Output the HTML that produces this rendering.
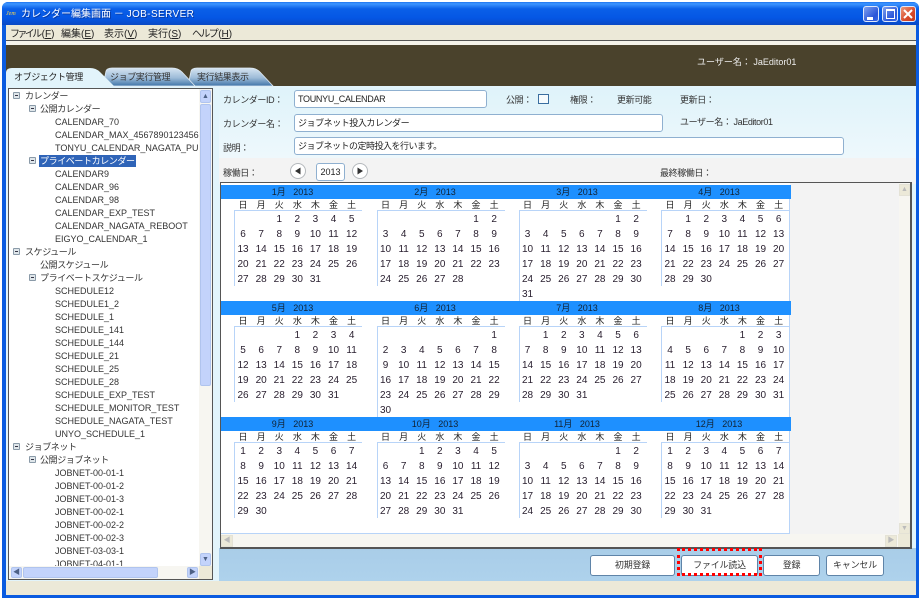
<!DOCTYPE html>
<html><head><meta charset="utf-8"><style>
html,body{margin:0;padding:0;background:#fff}
body{width:922px;height:600px;overflow:hidden;position:relative;font-family:"Liberation Sans","Noto Sans CJK JP",sans-serif;color:#333;filter:blur(.3px)}
div,span{box-sizing:border-box}
.a{position:absolute}
.t{position:absolute;white-space:nowrap;font-size:9px;line-height:13px;color:#333}
.j{letter-spacing:-.4px}
.i{position:absolute;background:#fff;border:1px solid #8fb0d0;border-radius:3px;font-size:9px;line-height:16px;padding-left:3px;color:#222;white-space:nowrap}
.b{position:absolute;top:555px;height:21px;background:#fff;border:1px solid #5f84a8;border-radius:3px;font-size:9px;line-height:19px;text-align:center;color:#333;letter-spacing:-.2px}
.x{position:absolute;width:7px;height:7px;border:1px solid #8a9aa8;background:#dfe6ea;border-radius:1px}
.x:after{content:"";position:absolute;left:1px;top:2px;width:3px;height:1px;background:#334}
.m{position:absolute;width:143px;height:116px;color:#222}
.m b{display:block;width:143px;height:14px;background:#1e90ff;font-weight:normal;font-size:9px;line-height:14px;text-align:center;color:#123;white-space:pre;padding-right:1px}
.m p{margin:0 0 0 13px;display:grid;grid-template-columns:repeat(7,18.1px);height:11px;font-size:9px;line-height:12px;text-align:center;color:#222}
.g{display:grid;grid-template-columns:repeat(7,18.1px);grid-auto-rows:15px;margin-left:13px;border-top:1px solid #b8d4f8;font-size:10px;line-height:17px;text-align:center;color:#2a2030;position:relative;width:128px}
.g:before{content:"";position:absolute;left:0;top:-1px;bottom:0;width:1px;background:#b8d4f8}
.wb{position:absolute;top:6px;width:16px;height:16px;border:1px solid #dfe8fa;border-radius:3px;background:linear-gradient(135deg,#7fa0ee,#2a55d8 70%,#3c6ae6)}
.sb{position:absolute;background:#c3d3fb;border:1px solid #b0c4ee;border-radius:2px;color:#4d6185;text-align:center;font-size:7px;line-height:10px}
.mn{position:absolute;top:28px;white-space:nowrap;font-size:10px;line-height:13px;color:#222}
</style></head><body>

<!-- window frame -->
<div class="a" style="left:2px;top:2px;width:917px;height:596px;border-radius:6px 6px 0 0;background:#0a5be0"></div>
<div class="a" style="left:2px;top:2px;width:917px;height:23px;border-radius:6px 6px 0 0;background:linear-gradient(#1e74f0 0,#3d95ff 8%,#0a5fe8 30%,#0556e4 70%,#0a49c4 100%)"></div>
<div class="a" style="left:6px;top:25px;width:910px;height:570px;background:#ece9d8"></div>

<!-- title bar -->
<span class="t" style="left:6px;top:8px;font:italic 6px/12px 'Liberation Serif',serif;color:#ffd84a">Jem</span>
<span class="t" style="left:21px;top:7px;font-size:10px;line-height:15px;color:#fff;text-shadow:1px 1px 0 #0a3aa0">カレンダー編集画面 － <span style="letter-spacing:.4px">JOB-SERVER</span></span>
<div class="wb" style="left:863px"><div class="a" style="left:3px;top:10px;width:6px;height:3px;background:#fff"></div></div>
<div class="wb" style="left:882px"><div class="a" style="left:3px;top:2px;width:9px;height:10px;border:1px solid #fff;border-top-width:2px"></div></div>
<div class="wb" style="left:900px;background:linear-gradient(135deg,#ec9a7c,#d8492a 60%,#c43a1c)"><svg class="a" style="left:2px;top:2px" width="10" height="10"><path d="M1 1L9 9M9 1L1 9" stroke="#fff" stroke-width="2"/></svg></div>

<!-- menu -->
<span class="mn" style="left:10px"><span style="letter-spacing:-2.6px">ファイル</span><span style="margin-left:2px">(<u>F</u>)</span></span>
<span class="mn" style="left:61px">編集(<u>E</u>)</span>
<span class="mn" style="left:104px">表示(<u>V</u>)</span>
<span class="mn" style="left:148px">実行(<u>S</u>)</span>
<span class="mn" style="left:192px"><span style="letter-spacing:-1.6px">ヘルプ</span><span style="margin-left:1px">(<u>H</u>)</span></span>
<div class="a" style="left:6px;top:40px;width:910px;height:1px;background:#555"></div>
<div class="a" style="left:6px;top:41px;width:910px;height:4px;background:#f5f3ea"></div>

<!-- dark band -->
<div class="a" style="left:6px;top:45px;width:910px;height:41px;background:#4a422c"></div>
<span class="t" style="left:697px;top:56px;color:#eee">ユーザー名： JaEditor01</span>

<!-- main panels -->
<div class="a" style="left:6px;top:86px;width:910px;height:495px;background:#e2f4fb"></div>
<div class="a" style="left:219px;top:88px;width:697px;height:70px;background:linear-gradient(#dff3fa,#eef8fc)"></div>
<div class="a" style="left:219px;top:158px;width:697px;height:26px;background:#f3f3f3"></div>
<div class="a" style="left:219px;top:548px;width:697px;height:33px;background:linear-gradient(#a9cde8,#aed2ec)"></div>
<div class="a" style="left:6px;top:581px;width:910px;height:14px;background:#ece9d8"></div>

<!-- tabs -->
<svg class="a" style="left:0;top:64px" width="290" height="26">
<defs><linearGradient id="tg" x1="0" y1="0" x2="0" y2="1"><stop offset="0" stop-color="#d6e5f2"/><stop offset=".55" stop-color="#9dbbd8"/><stop offset="1" stop-color="#3f74a8"/></linearGradient></defs>
<path d="M188 22 L191 7 Q192 4 197 4 L250 4 Q256 4 260 8 L273 22Z" fill="url(#tg)" stroke="#dfeaf3" stroke-width=".8"/>
<path d="M103 22 L106 7 Q107 4 112 4 L172 4 Q178 4 182 8 L195 22Z" fill="url(#tg)" stroke="#dfeaf3" stroke-width=".8"/>
<path d="M6 24 L6 9 Q6 4 12 4 L90 4 Q96 4 100 8 L114 22 L114 24Z" fill="#e2f4fb"/>
</svg>
<span class="t j" style="left:14px;top:71px;color:#222">オブジェクト管理</span>
<span class="t j" style="left:110px;top:71px;color:#333">ジョブ実行管理</span>
<span class="t j" style="left:197px;top:71px;color:#333">実行結果表示</span>

<!-- tree panel -->
<div class="a" style="left:8px;top:88px;width:205px;height:492px;background:#fff;border:1px solid #555;overflow:hidden">
<div class="a" style="left:0;top:0;width:190px;height:478px;overflow:hidden">
<div class="x" style="left:4px;top:3px"></div><span class="t j" style="left:16px;top:1px">カレンダー</span>
<div class="x" style="left:20px;top:16px"></div><span class="t j" style="left:31px;top:14px">公開カレンダー</span>
<span class="t" style="left:46px;top:27px">CALENDAR_70</span>
<span class="t" style="left:46px;top:40px">CALENDAR_MAX_456789012345678</span>
<span class="t" style="left:46px;top:53px">TONYU_CALENDAR_NAGATA_PUBLIC</span>
<div class="x" style="left:20px;top:68px"></div><span class="t j" style="left:30px;top:66px;background:#2f64b8;color:#fff;padding:0 1px;height:12px;line-height:12px">プライベートカレンダー</span>
<span class="t" style="left:46px;top:79px">CALENDAR9</span>
<span class="t" style="left:46px;top:92px">CALENDAR_96</span>
<span class="t" style="left:46px;top:105px">CALENDAR_98</span>
<span class="t" style="left:46px;top:118px">CALENDAR_EXP_TEST</span>
<span class="t" style="left:46px;top:131px">CALENDAR_NAGATA_REBOOT</span>
<span class="t" style="left:46px;top:144px">EIGYO_CALENDAR_1</span>
<div class="x" style="left:4px;top:159px"></div><span class="t j" style="left:16px;top:157px">スケジュール</span>
<span class="t j" style="left:31px;top:170px">公開スケジュール</span>
<div class="x" style="left:20px;top:185px"></div><span class="t j" style="left:31px;top:183px">プライベートスケジュール</span>
<span class="t" style="left:46px;top:196px">SCHEDULE12</span>
<span class="t" style="left:46px;top:209px">SCHEDULE1_2</span>
<span class="t" style="left:46px;top:222px">SCHEDULE_1</span>
<span class="t" style="left:46px;top:235px">SCHEDULE_141</span>
<span class="t" style="left:46px;top:248px">SCHEDULE_144</span>
<span class="t" style="left:46px;top:261px">SCHEDULE_21</span>
<span class="t" style="left:46px;top:274px">SCHEDULE_25</span>
<span class="t" style="left:46px;top:287px">SCHEDULE_28</span>
<span class="t" style="left:46px;top:300px">SCHEDULE_EXP_TEST</span>
<span class="t" style="left:46px;top:313px">SCHEDULE_MONITOR_TEST</span>
<span class="t" style="left:46px;top:326px">SCHEDULE_NAGATA_TEST</span>
<span class="t" style="left:46px;top:339px">UNYO_SCHEDULE_1</span>
<div class="x" style="left:4px;top:354px"></div><span class="t j" style="left:16px;top:352px">ジョブネット</span>
<div class="x" style="left:20px;top:367px"></div><span class="t j" style="left:31px;top:365px">公開ジョブネット</span>
<span class="t" style="left:46px;top:378px">JOBNET-00-01-1</span>
<span class="t" style="left:46px;top:391px">JOBNET-00-01-2</span>
<span class="t" style="left:46px;top:404px">JOBNET-00-01-3</span>
<span class="t" style="left:46px;top:417px">JOBNET-00-02-1</span>
<span class="t" style="left:46px;top:430px">JOBNET-00-02-2</span>
<span class="t" style="left:46px;top:443px">JOBNET-00-02-3</span>
<span class="t" style="left:46px;top:456px">JOBNET-03-03-1</span>
<span class="t" style="left:46px;top:469px">JOBNET-04-01-1</span>
</div>
<!-- v scrollbar -->
<div class="a" style="left:190px;top:0;width:13px;height:490px;background:#f7f6f1"></div>
<div class="sb" style="left:191px;top:1px;width:11px;height:13px;line-height:12px">&#9650;</div>
<div class="sb" style="left:191px;top:15px;width:11px;height:282px"></div>
<div class="sb" style="left:191px;top:464px;width:11px;height:13px;line-height:12px">&#9660;</div>
<!-- h scrollbar -->
<div class="a" style="left:0;top:477px;width:190px;height:13px;background:#f7f6f1"></div>
<div class="sb" style="left:2px;top:478px;width:11px;height:11px;line-height:10px">&#9664;</div>
<div class="sb" style="left:14px;top:478px;width:135px;height:11px"></div>
<div class="sb" style="left:178px;top:478px;width:11px;height:11px;line-height:10px">&#9654;</div>
<div class="a" style="left:190px;top:477px;width:13px;height:13px;background:#ece9d8"></div>
</div>

<!-- form -->
<span class="t j" style="left:223px;top:94px">カレンダーID：</span>
<div class="i" style="left:294px;top:90px;width:193px;height:18px;letter-spacing:-.3px">TOUNYU_CALENDAR</div>
<span class="t j" style="left:506px;top:94px">公開：</span>
<div class="a" style="left:538px;top:94px;width:11px;height:10px;background:#f6fbfd;border:1px solid #3a6ea0"></div>
<span class="t j" style="left:570px;top:94px">権限：</span>
<span class="t j" style="left:617px;top:94px">更新可能</span>
<span class="t j" style="left:680px;top:94px">更新日：</span>
<span class="t j" style="left:223px;top:118px">カレンダー名：</span>
<div class="i" style="left:294px;top:114px;width:369px;height:18px;line-height:17px;letter-spacing:-.45px">ジョブネット投入カレンダー</div>
<span class="t j" style="left:680px;top:116px">ユーザー名： JaEditor01</span>
<span class="t j" style="left:223px;top:142px">説明：</span>
<div class="i" style="left:294px;top:137px;width:550px;height:18px;line-height:17px;letter-spacing:-.5px">ジョブネットの定時投入を行います。</div>
<span class="t j" style="left:223px;top:167px">稼働日：</span>
<div class="a" style="left:290px;top:163px;width:16px;height:16px;border-radius:50%;background:#fff;border:1px solid #b4b8bc"></div>
<svg class="a" style="left:290px;top:163px" width="16" height="16"><path d="M5 8L10.5 4.5V11.5Z" fill="#333"/></svg>
<div class="i" style="left:316px;top:163px;width:29px;height:18px;text-align:center;padding:0;line-height:17px">2013</div>
<div class="a" style="left:352px;top:163px;width:16px;height:16px;border-radius:50%;background:#fff;border:1px solid #b4b8bc"></div>
<svg class="a" style="left:352px;top:163px" width="16" height="16"><path d="M11 8L5.5 4.5V11.5Z" fill="#333"/></svg>
<span class="t j" style="left:660px;top:167px">最終稼働日：</span>

<!-- calendar container -->
<div class="a" style="left:220px;top:182px;width:692px;height:367px;background:#f3f3f3;border:1px solid #555;border-bottom-width:2px;border-right-width:2px"></div>
<div class="a" style="left:221px;top:185px;width:569px;height:349px;background:#fff;border-right:1px solid #b8d4f8;border-bottom:1px solid #b8d4f8"></div>
<div class="a" style="left:221px;top:183px;width:569px;height:2px;background:#fff"></div>
<div class="a" style="left:899px;top:183px;width:11px;height:350px;background:#f7f6f1"></div>
<div class="a" style="left:899px;top:184px;width:11px;height:12px;background:#ece9d8;border:1px solid #e4e2d6;color:#bbb;font-size:7px;line-height:10px;text-align:center">&#9650;</div>
<div class="a" style="left:899px;top:523px;width:11px;height:11px;background:#ece9d8;border:1px solid #e4e2d6;color:#bbb;font-size:7px;line-height:9px;text-align:center">&#9660;</div>
<div class="a" style="left:221px;top:534px;width:689px;height:13px;background:#f7f6f1"></div>
<div class="a" style="left:221px;top:535px;width:12px;height:12px;background:#ece9d8;border:1px solid #e4e2d6;color:#bbb;font-size:7px;line-height:10px;text-align:center">&#9664;</div>
<div class="a" style="left:885px;top:535px;width:12px;height:12px;background:#ece9d8;border:1px solid #e4e2d6;color:#bbb;font-size:7px;line-height:10px;text-align:center">&#9654;</div>
<div class="a" style="left:898px;top:534px;width:12px;height:13px;background:#ece9d8"></div>

<!-- months -->
<div class="m" style="left:221px;top:185px"><b>1月   2013</b><p><span>日</span><span>月</span><span>火</span><span>水</span><span>木</span><span>金</span><span>土</span></p><div class="g"><i></i><i></i><span>1</span><span>2</span><span>3</span><span>4</span><span>5</span><span>6</span><span>7</span><span>8</span><span>9</span><span>10</span><span>11</span><span>12</span><span>13</span><span>14</span><span>15</span><span>16</span><span>17</span><span>18</span><span>19</span><span>20</span><span>21</span><span>22</span><span>23</span><span>24</span><span>25</span><span>26</span><span>27</span><span>28</span><span>29</span><span>30</span><span>31</span></div></div>
<div class="m" style="left:363.5px;top:185px"><b>2月   2013</b><p><span>日</span><span>月</span><span>火</span><span>水</span><span>木</span><span>金</span><span>土</span></p><div class="g"><i></i><i></i><i></i><i></i><i></i><span>1</span><span>2</span><span>3</span><span>4</span><span>5</span><span>6</span><span>7</span><span>8</span><span>9</span><span>10</span><span>11</span><span>12</span><span>13</span><span>14</span><span>15</span><span>16</span><span>17</span><span>18</span><span>19</span><span>20</span><span>21</span><span>22</span><span>23</span><span>24</span><span>25</span><span>26</span><span>27</span><span>28</span></div></div>
<div class="m" style="left:505.5px;top:185px"><b>3月   2013</b><p><span>日</span><span>月</span><span>火</span><span>水</span><span>木</span><span>金</span><span>土</span></p><div class="g"><i></i><i></i><i></i><i></i><i></i><span>1</span><span>2</span><span>3</span><span>4</span><span>5</span><span>6</span><span>7</span><span>8</span><span>9</span><span>10</span><span>11</span><span>12</span><span>13</span><span>14</span><span>15</span><span>16</span><span>17</span><span>18</span><span>19</span><span>20</span><span>21</span><span>22</span><span>23</span><span>24</span><span>25</span><span>26</span><span>27</span><span>28</span><span>29</span><span>30</span><span>31</span></div></div>
<div class="m" style="left:648px;top:185px;width:142px"><b style="width:142px">4月   2013</b><p><span>日</span><span>月</span><span>火</span><span>水</span><span>木</span><span>金</span><span>土</span></p><div class="g"><i></i><span>1</span><span>2</span><span>3</span><span>4</span><span>5</span><span>6</span><span>7</span><span>8</span><span>9</span><span>10</span><span>11</span><span>12</span><span>13</span><span>14</span><span>15</span><span>16</span><span>17</span><span>18</span><span>19</span><span>20</span><span>21</span><span>22</span><span>23</span><span>24</span><span>25</span><span>26</span><span>27</span><span>28</span><span>29</span><span>30</span></div></div>

<div class="m" style="left:221px;top:301px"><b>5月   2013</b><p><span>日</span><span>月</span><span>火</span><span>水</span><span>木</span><span>金</span><span>土</span></p><div class="g"><i></i><i></i><i></i><span>1</span><span>2</span><span>3</span><span>4</span><span>5</span><span>6</span><span>7</span><span>8</span><span>9</span><span>10</span><span>11</span><span>12</span><span>13</span><span>14</span><span>15</span><span>16</span><span>17</span><span>18</span><span>19</span><span>20</span><span>21</span><span>22</span><span>23</span><span>24</span><span>25</span><span>26</span><span>27</span><span>28</span><span>29</span><span>30</span><span>31</span></div></div>
<div class="m" style="left:363.5px;top:301px"><b>6月   2013</b><p><span>日</span><span>月</span><span>火</span><span>水</span><span>木</span><span>金</span><span>土</span></p><div class="g"><i></i><i></i><i></i><i></i><i></i><i></i><span>1</span><span>2</span><span>3</span><span>4</span><span>5</span><span>6</span><span>7</span><span>8</span><span>9</span><span>10</span><span>11</span><span>12</span><span>13</span><span>14</span><span>15</span><span>16</span><span>17</span><span>18</span><span>19</span><span>20</span><span>21</span><span>22</span><span>23</span><span>24</span><span>25</span><span>26</span><span>27</span><span>28</span><span>29</span><span>30</span></div></div>
<div class="m" style="left:505.5px;top:301px"><b>7月   2013</b><p><span>日</span><span>月</span><span>火</span><span>水</span><span>木</span><span>金</span><span>土</span></p><div class="g"><i></i><span>1</span><span>2</span><span>3</span><span>4</span><span>5</span><span>6</span><span>7</span><span>8</span><span>9</span><span>10</span><span>11</span><span>12</span><span>13</span><span>14</span><span>15</span><span>16</span><span>17</span><span>18</span><span>19</span><span>20</span><span>21</span><span>22</span><span>23</span><span>24</span><span>25</span><span>26</span><span>27</span><span>28</span><span>29</span><span>30</span><span>31</span></div></div>
<div class="m" style="left:648px;top:301px;width:142px"><b style="width:142px">8月   2013</b><p><span>日</span><span>月</span><span>火</span><span>水</span><span>木</span><span>金</span><span>土</span></p><div class="g"><i></i><i></i><i></i><i></i><span>1</span><span>2</span><span>3</span><span>4</span><span>5</span><span>6</span><span>7</span><span>8</span><span>9</span><span>10</span><span>11</span><span>12</span><span>13</span><span>14</span><span>15</span><span>16</span><span>17</span><span>18</span><span>19</span><span>20</span><span>21</span><span>22</span><span>23</span><span>24</span><span>25</span><span>26</span><span>27</span><span>28</span><span>29</span><span>30</span><span>31</span></div></div>

<div class="m" style="left:221px;top:417px"><b>9月   2013</b><p><span>日</span><span>月</span><span>火</span><span>水</span><span>木</span><span>金</span><span>土</span></p><div class="g"><span>1</span><span>2</span><span>3</span><span>4</span><span>5</span><span>6</span><span>7</span><span>8</span><span>9</span><span>10</span><span>11</span><span>12</span><span>13</span><span>14</span><span>15</span><span>16</span><span>17</span><span>18</span><span>19</span><span>20</span><span>21</span><span>22</span><span>23</span><span>24</span><span>25</span><span>26</span><span>27</span><span>28</span><span>29</span><span>30</span></div></div>
<div class="m" style="left:363.5px;top:417px"><b>10月   2013</b><p><span>日</span><span>月</span><span>火</span><span>水</span><span>木</span><span>金</span><span>土</span></p><div class="g"><i></i><i></i><span>1</span><span>2</span><span>3</span><span>4</span><span>5</span><span>6</span><span>7</span><span>8</span><span>9</span><span>10</span><span>11</span><span>12</span><span>13</span><span>14</span><span>15</span><span>16</span><span>17</span><span>18</span><span>19</span><span>20</span><span>21</span><span>22</span><span>23</span><span>24</span><span>25</span><span>26</span><span>27</span><span>28</span><span>29</span><span>30</span><span>31</span></div></div>
<div class="m" style="left:505.5px;top:417px"><b>11月   2013</b><p><span>日</span><span>月</span><span>火</span><span>水</span><span>木</span><span>金</span><span>土</span></p><div class="g"><i></i><i></i><i></i><i></i><i></i><span>1</span><span>2</span><span>3</span><span>4</span><span>5</span><span>6</span><span>7</span><span>8</span><span>9</span><span>10</span><span>11</span><span>12</span><span>13</span><span>14</span><span>15</span><span>16</span><span>17</span><span>18</span><span>19</span><span>20</span><span>21</span><span>22</span><span>23</span><span>24</span><span>25</span><span>26</span><span>27</span><span>28</span><span>29</span><span>30</span></div></div>
<div class="m" style="left:648px;top:417px;width:142px"><b style="width:142px">12月   2013</b><p><span>日</span><span>月</span><span>火</span><span>水</span><span>木</span><span>金</span><span>土</span></p><div class="g"><span>1</span><span>2</span><span>3</span><span>4</span><span>5</span><span>6</span><span>7</span><span>8</span><span>9</span><span>10</span><span>11</span><span>12</span><span>13</span><span>14</span><span>15</span><span>16</span><span>17</span><span>18</span><span>19</span><span>20</span><span>21</span><span>22</span><span>23</span><span>24</span><span>25</span><span>26</span><span>27</span><span>28</span><span>29</span><span>30</span><span>31</span></div></div>

<!-- buttons -->
<div class="b" style="left:590px;width:85px">初期登録</div>
<div class="b" style="left:681px;width:77px">ファイル読込</div>
<div class="b" style="left:763px;width:57px">登録</div>
<div class="b" style="left:826px;width:58px">キャンセル</div>
<div class="a" style="left:677px;top:548px;width:85px;height:28px;border:3px dotted #f00"></div>

</body></html>
